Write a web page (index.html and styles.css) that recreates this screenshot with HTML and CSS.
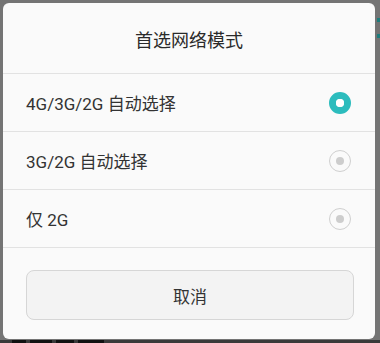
FILE: index.html
```html
<!DOCTYPE html>
<html lang="zh-CN">
<head>
<meta charset="utf-8">
<link rel="stylesheet" href="styles.css">
</head>
<body>
<div class="screen">
  <div class="bg-content">
    <div class="bg-icons"><span class="bg-mark"></span><span class="bg-mark"></span></div>
    <div class="bg-bits"><span class="bit w1"></span><span class="bit w2"></span><span class="bit w3"></span><span class="bit w4"></span></div>
  </div>
  <div class="dialog">
    <div class="title">首选网络模式</div>
    <div class="row"><span class="label">4G/3G/2G 自动选择</span><span class="radio on"></span></div>
    <div class="row"><span class="label">3G/2G 自动选择</span><span class="radio"></span></div>
    <div class="row"><span class="label">仅 2G</span><span class="radio"></span></div>
    <div class="btn">取消</div>
  </div>
</div>
</body>
</html>
```
FILE: styles.css
```css
html, body {
  margin: 0;
  padding: 0;
}
body {
  width: 380px;
  height: 343px;
  overflow: hidden;
  background: #747474;
  font-family: Roboto, "Noto Sans CJK SC", sans-serif;
}
.screen {
  position: relative;
  width: 380px;
  height: 343px;
  overflow: hidden;
}
.bg-content {
  height: 343px;
  display: flex;
  flex-direction: column;
  justify-content: space-between;
}
.bg-icons {
  display: flex;
  flex-direction: column;
  align-items: flex-end;
  gap: 12px;
  padding-top: 18px;
}
.bg-mark {
  display: block;
  width: 3px;
  height: 4px;
  background: #1e7d7d;
}
.bg-bits {
  display: flex;
  gap: 4px;
  padding-left: 12px;
  height: 3px;
  background: #3a3a3a;
}
.bit {
  display: block;
  height: 3px;
  background: #111;
}
.w1 { width: 14px; }
.w2 { width: 22px; }
.w3 { width: 18px; }
.w4 { width: 26px; }
.dialog {
  position: absolute;
  left: 3px;
  top: 3px;
  width: 372px;
  height: 336px;
  background: #fafafa;
  border-radius: 6px;
  display: flex;
  flex-direction: column;
}
.title {
  height: 69px;
  padding-top: 1px;
  border-bottom: 1px solid #e2e2e2;
  display: flex;
  align-items: center;
  justify-content: center;
  font-size: 18px;
  color: #2a2a2a;
}
.row {
  height: 57px;
  border-bottom: 1px solid #e2e2e2;
  display: flex;
  align-items: center;
  justify-content: space-between;
  padding: 0 24px 0 23px;
}
.label {
  font-size: 17px;
  color: #333;
}
.radio {
  width: 22px;
  height: 22px;
  box-sizing: border-box;
  border-radius: 50%;
  border: 1px solid #cfcfcf;
  display: flex;
  align-items: center;
  justify-content: center;
}
.radio::after {
  content: "";
  width: 8px;
  height: 8px;
  border-radius: 50%;
  background: #cdcdcd;
}
.radio.on {
  border: 7px solid #2cbcbd;
}
.radio.on::after {
  background: #fff;
}
.btn {
  margin: 22px 21px 0 23px;
  height: 50px;
  box-sizing: border-box;
  border: 1px solid #d6d6d6;
  border-radius: 8px;
  background: #f3f3f3;
  display: flex;
  align-items: center;
  justify-content: center;
  font-size: 17px;
  color: #333;
}
```
